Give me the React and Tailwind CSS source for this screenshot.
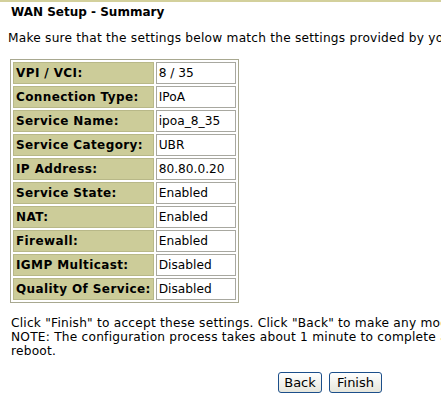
export default function App() {
  const rows = [
    ["VPI / VCI:", "8 / 35"],
    ["Connection Type:", "IPoA"],
    ["Service Name:", "ipoa_8_35"],
    ["Service Category:", "UBR"],
    ["IP Address:", "80.80.0.20"],
    ["Service State:", "Enabled"],
    ["NAT:", "Enabled"],
    ["Firewall:", "Enabled"],
    ["IGMP Multicast:", "Disabled"],
    ["Quality Of Service:", "Disabled"],
  ];
  return (
    <div className="w-[441px] h-[401px] overflow-hidden bg-white text-black text-[12.2px] font-['DejaVu_Sans',Verdana,sans-serif]">
      <div className="h-[2px] bg-[#d3d09c]"></div>
      <div className="pl-[11px] pt-[3px] font-bold text-[12px] leading-[14px] whitespace-nowrap">WAN Setup - Summary</div>
      <div className="pl-[8px] pt-[12px] leading-[14px] tracking-[0.22px] whitespace-nowrap">Make sure that the settings below match the settings provided by your ISP.</div>
      <div className="pl-[10px] pt-[14px]">
        <table className="border border-[#a8a890] border-separate border-spacing-[2px]">
          <tbody>
            {rows.map(([k, v]) => (
              <tr key={k}>
                <td className="w-[140px] h-[22px] bg-[#cccc99] border border-[#b8b888] px-[2px] font-bold text-[12px] tracking-[0.4px] whitespace-nowrap leading-[14px]">{k}</td>
                <td className="w-[80px] h-[22px] bg-white border border-[#a8a8a0] px-[2px] whitespace-nowrap leading-[14px]">{v}</td>
              </tr>
            ))}
          </tbody>
        </table>
      </div>
      <div className="pl-[11px] pt-[13px] leading-[14px] tracking-[0.22px] whitespace-nowrap">
        <div>Click "Finish" to accept these settings. Click "Back" to make any modifications.</div>
        <div>NOTE: The configuration process takes about 1 minute to complete and your DSL Router will</div>
        <div>reboot.</div>
      </div>
      <div className="flex pl-[278px] pt-[14px] gap-[7px]">
        <button className="h-[21px] w-[44px] border border-[#1c4f8a] rounded-[3px] bg-gradient-to-b from-white to-[#e6e6dc] text-[13px] leading-[14px]">Back</button>
        <button className="h-[21px] w-[53px] border border-[#1c4f8a] rounded-[3px] bg-gradient-to-b from-white to-[#e6e6dc] text-[13px] leading-[14px]">Finish</button>
      </div>
    </div>
  );
}
